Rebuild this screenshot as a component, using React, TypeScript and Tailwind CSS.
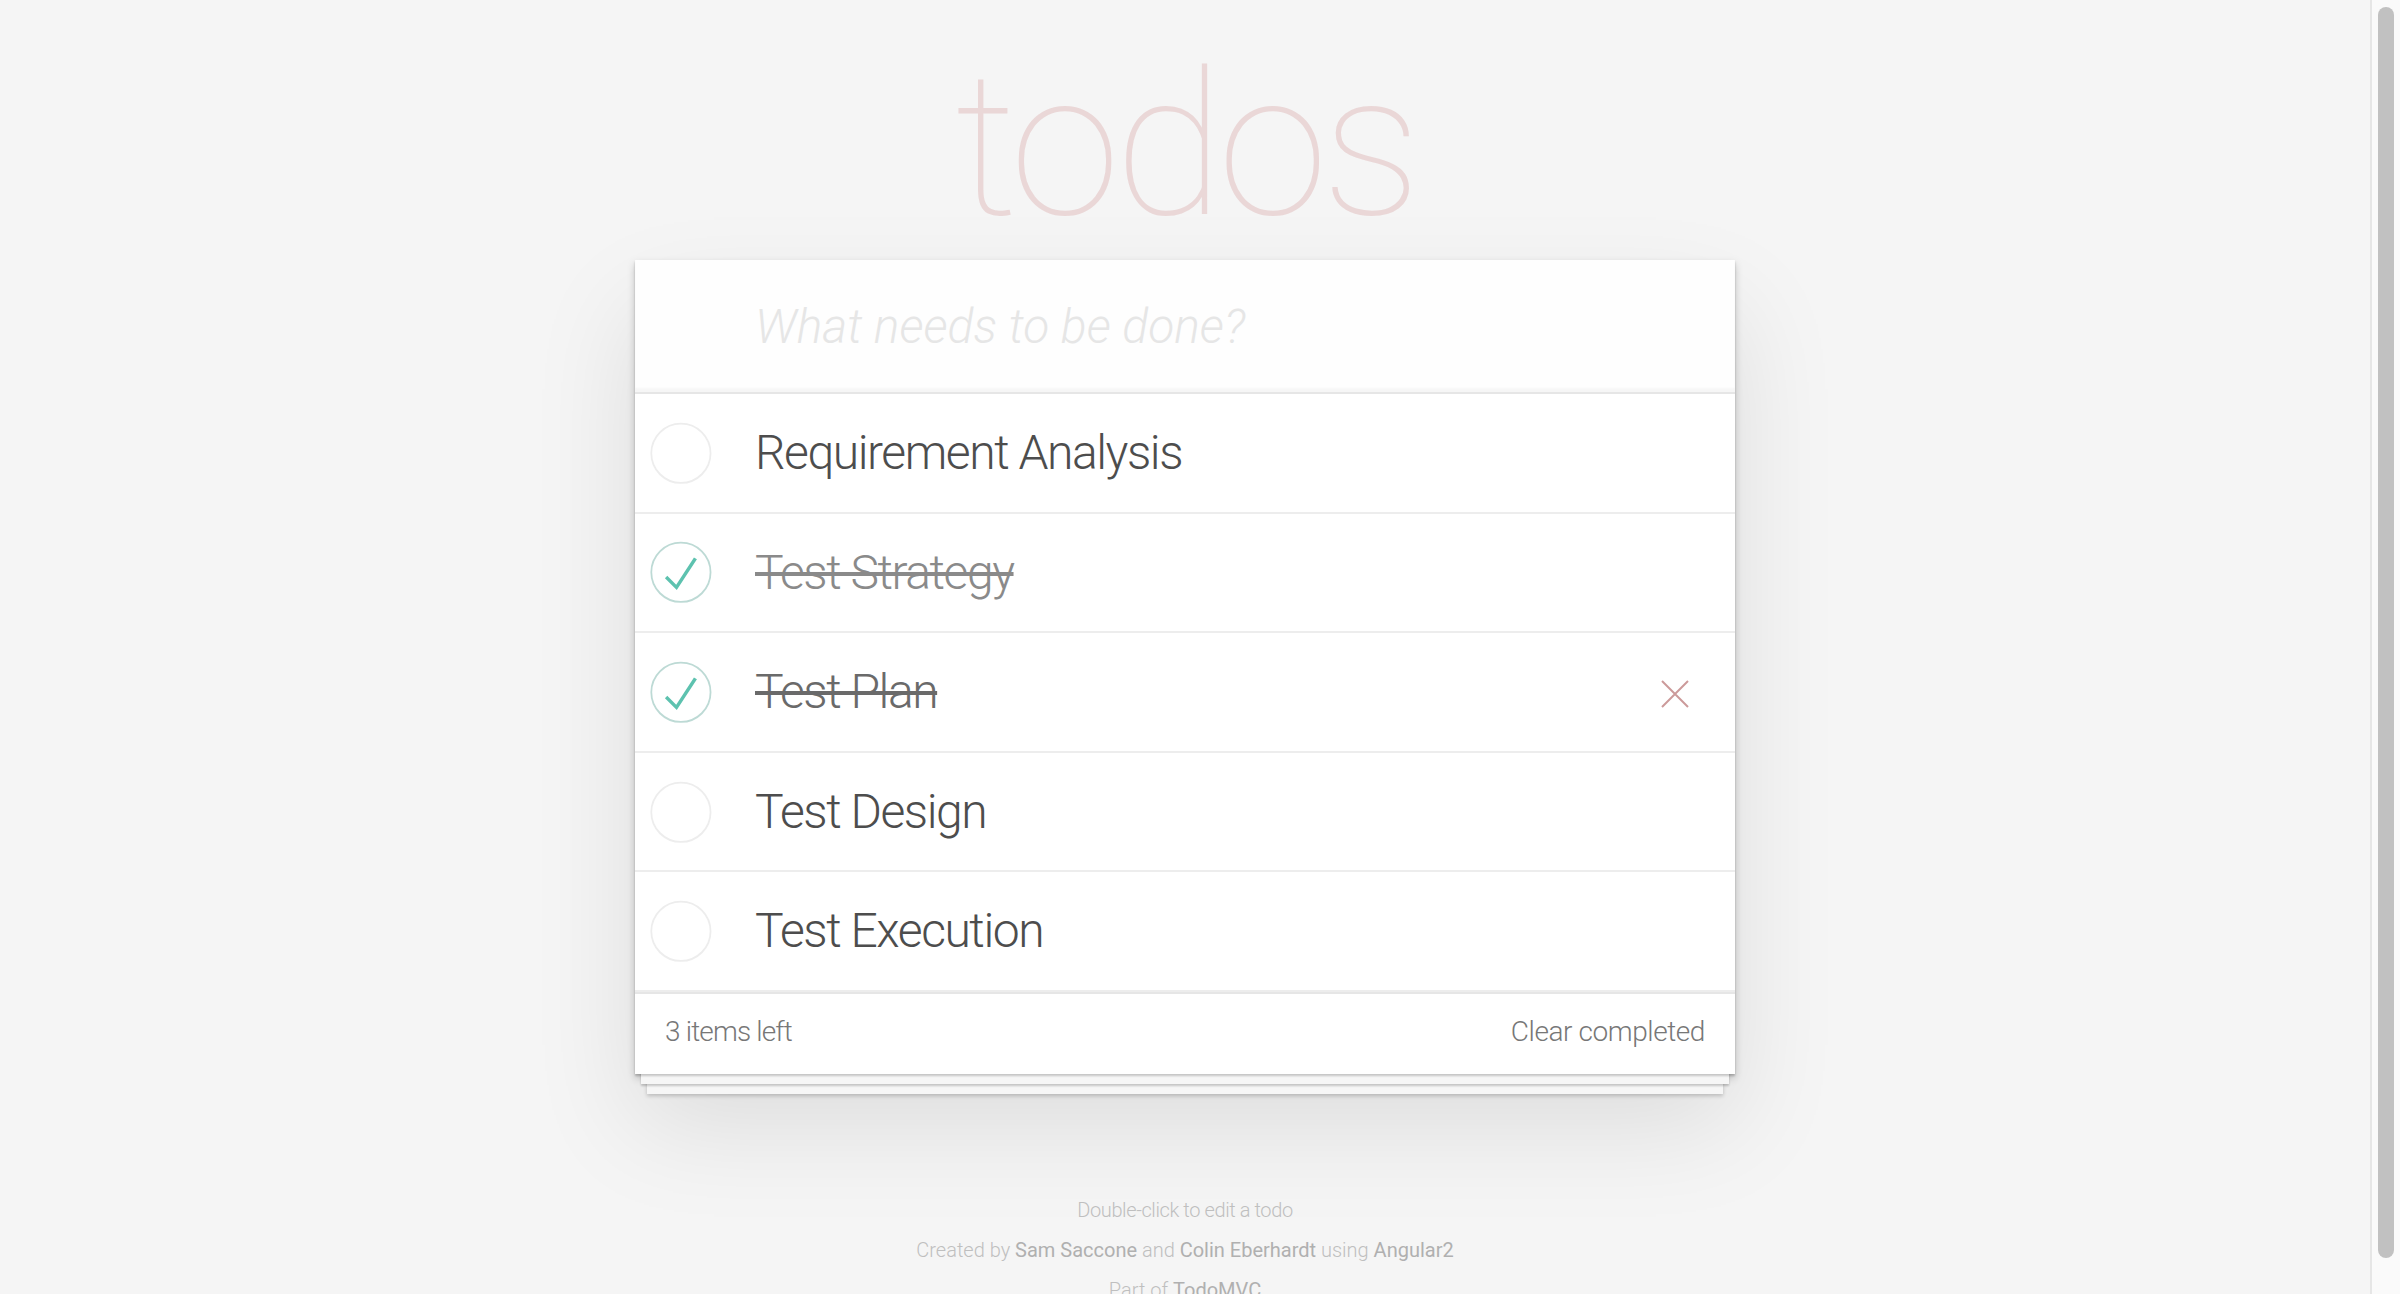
import { useState } from "react"

interface Todo {
  title: string
  completed: boolean
}

const initialTodos: Todo[] = [
  { title: "Requirement Analysis", completed: false },
  { title: "Test Strategy", completed: true },
  { title: "Test Plan", completed: true },
  { title: "Test Design", completed: false },
  { title: "Test Execution", completed: false },
]

function Toggle({ checked, onClick }: { checked: boolean; onClick: () => void }) {
  return (
    <button onClick={onClick} className="flex-none w-[80px] h-[80px]">
      <svg width="80" height="80" viewBox="-10 -18 100 135">
        <circle cx="50" cy="50" r="50" fill="none" stroke={checked ? "#bddad5" : "#ededed"} strokeWidth="3" />
        {checked && <path fill="#5dc2af" d="M72 25L42 71 27 56l-4 4 20 20 34-52z" />}
      </svg>
    </button>
  )
}

export default function App() {
  const [todos, setTodos] = useState<Todo[]>(initialTodos)
  const [hovered, setHovered] = useState<number | null>(2)

  const left = todos.filter((t) => !t.completed).length

  const toggle = (index: number) => {
    setTodos(todos.map((t, i) => (i === index ? { ...t, completed: !t.completed } : t)))
  }

  return (
    <div className="flex h-screen overflow-hidden bg-[#f5f5f5] font-['Roboto','Helvetica_Neue',Helvetica,Arial,sans-serif] font-light text-[#4d4d4d]">
      <main className="flex-1 min-w-0 overflow-hidden">
        <div className="mx-auto w-[1100px] pb-[20px]">
          <h1 className="h-[260px] pt-[46px] text-center text-[200px] leading-[200px] tracking-[-0.03em] font-thin text-[rgba(175,47,47,0.15)]">
            todos
          </h1>

          <section className="bg-white shadow-[0_2px_2px_rgba(0,0,0,0.2),0_16px_0_-6px_#f6f6f6,0_18px_2px_-6px_rgba(0,0,0,0.2),0_32px_0_-12px_#f6f6f6,0_34px_4px_-12px_rgba(0,0,0,0.2),0_4px_8px_0_rgba(0,0,0,0.2),0_50px_100px_0_rgba(0,0,0,0.1)]">
            <header>
              <input
                className="block w-full h-[132px] pl-[120px] pr-[32px] py-[32px] text-[48px] leading-[1.4em] bg-[rgba(0,0,0,0.003)] shadow-[inset_0_-4px_2px_rgba(0,0,0,0.03)] outline-none placeholder:italic placeholder:font-light placeholder:text-[#e6e6e6]"
                placeholder="What needs to be done?"
              />
            </header>

            <section className="border-t-2 border-[#e6e6e6]">
              <ul>
                {todos.map((todo, index) => (
                  <li
                    key={todo.title}
                    onMouseEnter={() => setHovered(index)}
                    className="flex items-center border-b-2 border-[#ededed]"
                  >
                    <Toggle checked={todo.completed} onClick={() => toggle(index)} />
                    <label
                      className={`flex-1 min-w-0 pl-[40px] pr-[30px] py-[30px] text-[48px] leading-[1.2] tracking-[-0.03em] ${
                        todo.completed
                          ? `line-through decoration-[4px] ${hovered === index ? "text-[#6a6a6a]" : "text-[#8a8a8a]"}`
                          : ""
                      }`}
                    >
                      {todo.title}
                    </label>
                    {hovered === index && todo.completed && (
                      <button className="flex-none w-[80px] h-[80px] mr-[20px] mt-[5px] flex items-center justify-center">
                        <svg width="28" height="28" viewBox="0 0 28 28">
                          <path d="M1 1L27 27M27 1L1 27" stroke="#cc9a9a" strokeWidth="2" />
                        </svg>
                      </button>
                    )}
                  </li>
                ))}
              </ul>
            </section>

            <footer className="flex items-center justify-between h-[82px] px-[30px] pb-[4px] border-t-2 border-[#e6e6e6] text-[28px] leading-[40px] text-[#777]">
              <span className="tracking-[-0.03em]">
                <strong className="font-light">{left}</strong> items left
              </span>
              <button className="font-light tracking-[-0.015em]">Clear completed</button>
            </footer>
          </section>

          <footer className="mt-[126px] text-center text-[20px] leading-none text-[#bfbfbf]">
            <p className="tracking-[-0.02em]">Double-click to edit a todo</p>
            <p className="mt-[20px]">
              Created by <a className="font-normal text-[#b0b0b0]">Sam Saccone</a> and{" "}
              <a className="font-normal text-[#b0b0b0]">Colin Eberhardt</a> using{" "}
              <a className="font-normal text-[#b0b0b0]">Angular2</a>
            </p>
            <p className="mt-[20px] pb-[20px]">
              Part of <a className="font-normal text-[#b0b0b0]">TodoMVC</a>
            </p>
          </footer>
        </div>
      </main>

      {/* scrollbar */}
      <aside className="flex-none w-[30px] border-l-2 border-[#e6e6e6] bg-[#fafafa] px-[6px] pt-[7px]">
        <div className="h-[1251px] rounded-full bg-[#c1c1c1]" />
      </aside>
    </div>
  )
}
